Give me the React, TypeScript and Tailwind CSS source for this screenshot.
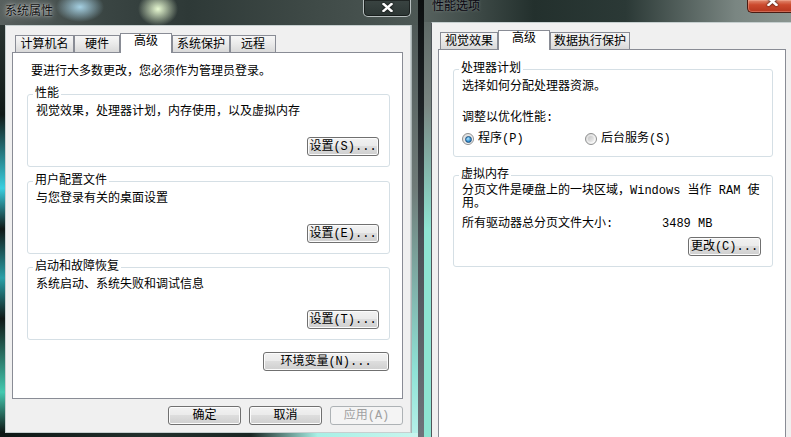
import type { ReactNode } from "react";

// Win7 "Aero" dialogs: 系统属性 and 性能选项 side by side on a dark desktop

const UI = "font-['Liberation_Mono','Noto_Sans_CJK_SC',monospace] text-[12px] text-black";

type TabDef = { label: string; w: string };

function Tabs({ tabs, active, inset }: { tabs: TabDef[]; active: string; inset: string }) {
  return (
    <div className={`flex h-[26px] shrink-0 items-end ${inset}`}>
      {tabs.map((t) =>
        t.label === active ? (
          <div
            key={t.label}
            className={`relative z-10 -mb-px h-[20px] ${t.w} border border-b-0 border-[#898c95] bg-white pt-[1px] text-center leading-[14px]`}
          >
            {t.label}
          </div>
        ) : (
          <div
            key={t.label}
            className={`h-[17px] ${t.w} border border-b-0 border-[#898c95] bg-[linear-gradient(180deg,#f6f6f6,#ebebeb_45%,#d9d9d9)] pt-[2px] text-center leading-[14px]`}
          >
            {t.label}
          </div>
        )
      )}
    </div>
  );
}

function Button({ children, w, disabled = false }: { children: ReactNode; w: string; disabled?: boolean }) {
  return (
    <button
      type="button"
      className={`flex h-[19px] ${w} shrink-0 items-center justify-center rounded-[3px] border leading-[14px] ${
        disabled
          ? "border-[#adb2b5] bg-[#f4f4f4] text-[#a0a0a0]"
          : "border-[#707070] bg-[linear-gradient(180deg,#f2f2f2,#ebebeb_45%,#dddddd_50%,#cfcfcf)] shadow-[inset_0_0_0_1px_#fcfcfc]"
      }`}
    >
      {children}
    </button>
  );
}

function Group({ title, children, className = "" }: { title: string; children: ReactNode; className?: string }) {
  return (
    <fieldset className={`rounded-[3px] border border-[#d5dfe5] pb-[10px] pl-[8px] pr-[10px] ${className}`}>
      <legend className="-ml-[3px] px-[2px] leading-[14px]">{title}</legend>
      {children}
    </fieldset>
  );
}

function Radio({ checked }: { checked: boolean }) {
  return (
    <span className="flex h-[12px] w-[12px] shrink-0 items-center justify-center rounded-full border border-[#8e8f8f] bg-[linear-gradient(135deg,#d8d8d8,#ffffff)]">
      {checked ? (
        <span className="h-[7px] w-[7px] rounded-full border border-[#1d4f7e] bg-[radial-gradient(circle_at_40%_35%,#b4e6ff,#2f8fd0_60%,#1a5d95)]" />
      ) : (
        <span className="h-[6px] w-[6px] rounded-full bg-[linear-gradient(135deg,#c4c4c4,#f0f0f0)]" />
      )}
    </span>
  );
}

function CloseX() {
  return (
    <svg width="11" height="9" viewBox="0 0 11 9" className="drop-shadow-[0_0_1px_rgba(0,0,0,0.9)]">
      <path d="M1.5 1L9.5 8M9.5 1L1.5 8" stroke="#ffffff" strokeWidth="2.4" strokeLinecap="square" />
    </svg>
  );
}

const sysTabs: TabDef[] = [
  { label: "计算机名", w: "w-[59px]" },
  { label: "硬件", w: "w-[46px]" },
  { label: "高级", w: "w-[52px]" },
  { label: "系统保护", w: "w-[58px]" },
  { label: "远程", w: "w-[46px]" },
];

const perfTabs: TabDef[] = [
  { label: "视觉效果", w: "w-[58px]" },
  { label: "高级", w: "w-[52px]" },
  { label: "数据执行保护", w: "w-[80px]" },
];

function SystemProperties() {
  return (
    <div className="flex h-full w-[418px] shrink-0 flex-col">
      <div className="flex h-[25px] shrink-0 justify-between bg-[radial-gradient(24px_15px_at_80px_7px,rgba(170,215,235,0.95),rgba(170,215,235,0)),radial-gradient(20px_17px_at_158px_9px,rgba(232,250,210,1),rgba(232,250,210,0)),linear-gradient(90deg,#58605e,#3a4543_25%,#2e3937_45%,#3f4a47_75%,#4d5855)] pl-[5px] pr-[7px]">
        <div className="pt-[5px] leading-[14px] text-[#111] [text-shadow:0_0_6px_rgba(255,255,255,0.85),0_0_2px_rgba(255,255,255,0.6)]">
          系统属性
        </div>
        <div className="flex h-[17px] w-[48px] justify-center rounded-b-[5px] border border-t-0 border-[#b8c0c0] bg-[linear-gradient(180deg,#3a4442,#2c3634)] pt-[3px] shadow-[inset_0_0_0_1px_rgba(0,0,0,0.45)]">
          <CloseX />
        </div>
      </div>

      <div className="flex min-h-0 flex-1">
        <div className="w-[5px] bg-[linear-gradient(180deg,#2a3431_0%,#101917_22%,#39cfe0_40%,#0f1816_50%,#2aa0a8_62%,#0f1816_72%,#44c9b0_90%,#0e1614_100%)]" />
        <div className="flex w-[406px] flex-col border border-[#c6cfcf] bg-[#f0f0f0] pb-[7px]">
          <Tabs tabs={sysTabs} active="高级" inset="ml-[9px]" />
          <div className="ml-[6px] mr-[7px] flex flex-1 flex-col border border-[#898c95] bg-white pl-[14px] pr-[12px] pt-[12px]">
            <p className="pl-[4px] leading-[14px]">要进行大多数更改，您必须作为管理员登录。</p>

            <Group title="性能" className="mt-[8px] pb-[9px]">
              <p className="mt-[4px] leading-[14px]">视觉效果，处理器计划，内存使用，以及虚拟内存</p>
              <div className="mt-[18px] flex justify-end">
                <Button w="w-[72px]">设置(S)...</Button>
              </div>
            </Group>

            <Group title="用户配置文件" className="mt-[7px] pb-[9px]">
              <p className="mt-[4px] leading-[14px]">与您登录有关的桌面设置</p>
              <div className="mt-[18px] flex justify-end">
                <Button w="w-[72px]">设置(E)...</Button>
              </div>
            </Group>

            <Group title="启动和故障恢复" className="mt-[6px] pb-[9px]">
              <p className="mt-[4px] leading-[14px]">系统启动、系统失败和调试信息</p>
              <div className="mt-[18px] flex justify-end">
                <Button w="w-[72px]">设置(T)...</Button>
              </div>
            </Group>

            <div className="mr-[1px] mt-[12px] flex justify-end">
              <Button w="w-[126px]">环境变量(N)...</Button>
            </div>
          </div>
          <div className="mr-[7px] mt-[7px] flex justify-end gap-[8px]">
            <Button w="w-[73px]">确定</Button>
            <Button w="w-[73px]">取消</Button>
            <Button w="w-[73px]" disabled>
              应用(A)
            </Button>
          </div>
        </div>
        <div className="w-[7px] border-l border-[#aab4b4] bg-[linear-gradient(180deg,#4f5957,#6f7b78_40%,#8fe2d6_85%,#b4f0e8)]" />
      </div>

      <div className="h-[4px] shrink-0 bg-[linear-gradient(90deg,#0e1614,#22302c_35%,#1a2623_60%,#a8f0e6_76%,#c9f5ee)]" />
    </div>
  );
}

function PerformanceOptions() {
  return (
    <div className="flex h-full min-w-0 flex-1 flex-col">
      <div className="flex h-[22px] shrink-0 bg-[linear-gradient(90deg,#56615e,#23302d_30%,#2b3936_55%,#7a8682_85%,#8a9590)] pl-[8px]">
        <div className="leading-[14px] text-[#0a0610] [text-shadow:0_0_3px_rgba(255,255,255,0.35)]">性能选项</div>
        <div className="-mr-[6px] ml-auto flex h-[13px] w-[50px] shrink-0 justify-center overflow-hidden rounded-bl-[5px] border border-r-0 border-t-0 border-[#4a1b12] bg-[linear-gradient(180deg,#e28c72,#cc4a2e_40%,#b5361e)] shadow-[inset_0_0_0_1px_rgba(255,200,180,0.35)]">
          <div className="-mt-[3px]">
            <CloseX />
          </div>
        </div>
      </div>

      <div className="flex min-h-0 flex-1">
        <div className="w-[7px] bg-[linear-gradient(180deg,#5f6a67,#7a8682_20%,#8ee4d2_50%,#8ee4d2)]" />
        <div className="flex flex-1 flex-col border-l border-t border-l-[#4f5559] border-t-[#c6cfcf] bg-[#f0f0f0]">
          <Tabs tabs={perfTabs} active="高级" inset="ml-[8px]" />
          <div className="ml-[6px] mr-[5px] flex-1 border border-b-0 border-[#898c95] bg-white pl-[14px] pr-[12px] pt-[12px]">
            <Group title="处理器计划">
              <p className="mt-[4px] leading-[14px]">选择如何分配处理器资源。</p>
              <p className="mt-[17px] leading-[14px]">调整以优化性能:</p>
              <div className="mt-[7px] flex items-center leading-[14px]">
                <div className="flex w-[123px] items-center gap-[4px]">
                  <Radio checked />
                  <span>程序(P)</span>
                </div>
                <div className="flex items-center gap-[4px]">
                  <Radio checked={false} />
                  <span>后台服务(S)</span>
                </div>
              </div>
            </Group>

            <Group title="虚拟内存" className="mt-[11px] pr-[11px]">
              <p className="mt-[3px] whitespace-nowrap leading-[13px]">
                分页文件是硬盘上的一块区域，Windows 当作 RAM 使
                <br />
                用。
              </p>
              <div className="mt-[6px] flex leading-[14px]">
                <span className="w-[200px]">所有驱动器总分页文件大小:</span>
                <span>3489 MB</span>
              </div>
              <div className="mt-[6px] flex justify-end">
                <Button w="w-[73px]">更改(C)...</Button>
              </div>
            </Group>
          </div>
        </div>
      </div>
    </div>
  );
}

export default function App() {
  return (
    <div className={`flex h-[437px] w-[791px] overflow-hidden bg-[#0d1412] ${UI}`}>
      <SystemProperties />
      <div className="w-[6px] shrink-0 bg-[linear-gradient(180deg,#0c0f10,#1e2326_25%,#4a5056_55%,#6e737a)]" />
      <PerformanceOptions />
    </div>
  );
}
